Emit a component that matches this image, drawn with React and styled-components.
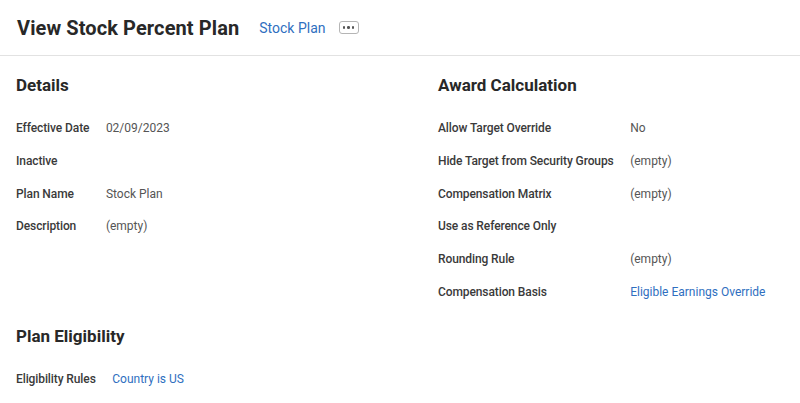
import React from "react";
import styled, { createGlobalStyle } from "styled-components";

const Global = createGlobalStyle`
  html, body { margin: 0; padding: 0; background: #fff; }
  body { font-family: Roboto, "Noto Sans", "Liberation Sans", sans-serif; color: #333; }
`;

const Page = styled.div`
  width: 800px;
  height: 403px;
  background: #fff;
  overflow: hidden;
`;

const Header = styled.header`
  height: 55px;
  border-bottom: 1px solid #e2e2e2;
  display: flex;
  align-items: center;
  padding: 0 17px;
  box-sizing: content-box;
`;

const Title = styled.h1`
  margin: 0;
  font-size: 20px;
  font-weight: 700;
  letter-spacing: 0.1px;
  color: #282828;
  line-height: 24px;
`;

const HeaderLink = styled.a`
  margin-left: 20px;
  font-size: 14px;
  color: #2f6fc0;
  text-decoration: none;
  line-height: 20px;
`;

const MoreButton = styled.button`
  margin-left: 13px;
  width: 20px;
  height: 13px;
  border: 1px solid #b5b5b5;
  border-radius: 3px;
  background: #fff;
  padding: 0;
  display: flex;
  align-items: center;
  justify-content: center;
  gap: 2px;
`;

const Dot = styled.span`
  width: 2.5px;
  height: 2.5px;
  border-radius: 50%;
  background: #555;
`;

const Body = styled.main`
  padding: 19px 16px 0;
`;

const Columns = styled.div`
  display: grid;
  grid-template-columns: 422px 1fr;
`;

const Section = styled.section`
  display: flex;
  flex-direction: column;
  margin-top: ${(p) => p.$top || 0}px;
`;

const SectionTitle = styled.h2`
  margin: 0 0 25px;
  font-size: 17px;
  font-weight: 700;
  line-height: 20px;
  color: #282828;
`;

const Fields = styled.dl`
  margin: 0;
  display: grid;
  grid-template-columns: max-content 1fr;
  column-gap: 16.5px;
  row-gap: 16.8px;
  font-size: 12px;
  line-height: 16px;
`;

const Label = styled.dt`
  font-weight: 500;
  letter-spacing: -0.1px;
  color: #3a3a3a;
`;

const Value = styled.dd`
  margin: 0;
  color: ${(p) => (p.$link ? "#2f6fc0" : "#555")};
`;

const Field = ({ label, value, link }) => (
  <>
    <Label>{label}</Label>
    <Value $link={link}>{value}</Value>
  </>
);

export default function App() {
  return (
    <Page>
      <Global />
      <Header>
        <Title>View Stock Percent Plan</Title>
        <HeaderLink>Stock Plan</HeaderLink>
        <MoreButton aria-label="More">
          <Dot />
          <Dot />
          <Dot />
        </MoreButton>
      </Header>
      <Body>
        <Columns>
          <Section>
            <SectionTitle>Details</SectionTitle>
            <Fields>
              <Field label="Effective Date" value="02/09/2023" />
              <Field label="Inactive" value="" />
              <Field label="Plan Name" value="Stock Plan" />
              <Field label="Description" value="(empty)" />
            </Fields>
          </Section>
          <Section>
            <SectionTitle>Award Calculation</SectionTitle>
            <Fields>
              <Field label="Allow Target Override" value="No" />
              <Field label="Hide Target from Security Groups" value="(empty)" />
              <Field label="Compensation Matrix" value="(empty)" />
              <Field label="Use as Reference Only" value="" />
              <Field label="Rounding Rule" value="(empty)" />
              <Field label="Compensation Basis" value="Eligible Earnings Override" link />
            </Fields>
          </Section>
        </Columns>
        <Section $top={26}>
          <SectionTitle>Plan Eligibility</SectionTitle>
          <Fields>
            <Field label="Eligibility Rules" value="Country is US" link />
          </Fields>
        </Section>
      </Body>
    </Page>
  );
}
